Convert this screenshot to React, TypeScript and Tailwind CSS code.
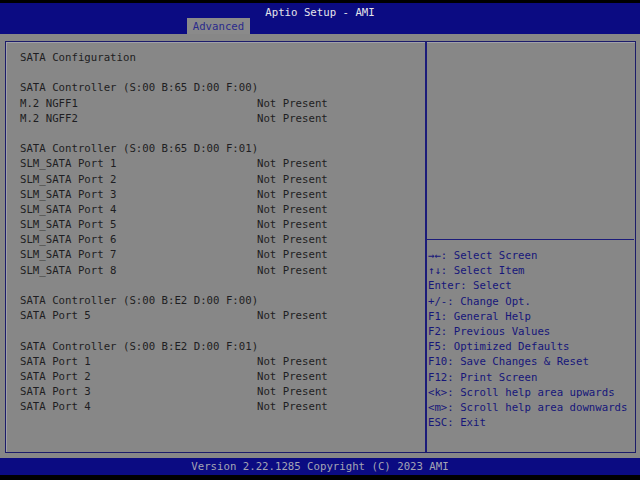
import React from 'react';

type Row = { label: string; value?: string } | null;

const rows: Row[] = [
  { label: 'SATA Configuration' },
  null,
  { label: 'SATA Controller (S:00 B:65 D:00 F:00)' },
  { label: 'M.2 NGFF1', value: 'Not Present' },
  { label: 'M.2 NGFF2', value: 'Not Present' },
  null,
  { label: 'SATA Controller (S:00 B:65 D:00 F:01)' },
  { label: 'SLM_SATA Port 1', value: 'Not Present' },
  { label: 'SLM_SATA Port 2', value: 'Not Present' },
  { label: 'SLM_SATA Port 3', value: 'Not Present' },
  { label: 'SLM_SATA Port 4', value: 'Not Present' },
  { label: 'SLM_SATA Port 5', value: 'Not Present' },
  { label: 'SLM_SATA Port 6', value: 'Not Present' },
  { label: 'SLM_SATA Port 7', value: 'Not Present' },
  { label: 'SLM_SATA Port 8', value: 'Not Present' },
  null,
  { label: 'SATA Controller (S:00 B:E2 D:00 F:00)' },
  { label: 'SATA Port 5', value: 'Not Present' },
  null,
  { label: 'SATA Controller (S:00 B:E2 D:00 F:01)' },
  { label: 'SATA Port 1', value: 'Not Present' },
  { label: 'SATA Port 2', value: 'Not Present' },
  { label: 'SATA Port 3', value: 'Not Present' },
  { label: 'SATA Port 4', value: 'Not Present' },
];

const help = [
  '→←: Select Screen',
  '↑↓: Select Item',
  'Enter: Select',
  '+/-: Change Opt.',
  'F1: General Help',
  'F2: Previous Values',
  'F5: Optimized Defaults',
  'F10: Save Changes & Reset',
  'F12: Print Screen',
  '<k>: Scroll help area upwards',
  '<m>: Scroll help area downwards',
  'ESC: Exit',
];

export default function App() {
  return (
    <div className="w-[640px] h-[480px] flex flex-col bg-black font-['DejaVu_Sans_Mono',monospace] text-[10.7px] leading-[15.2px] overflow-hidden">
      {/* header */}
      <div className="mt-[3px] h-[31px] bg-[#0b0b82] relative flex flex-col items-center">
        <div className="text-[#e4e4ea] mt-[2px]">Aptio Setup - AMI</div>
        <div className="absolute left-[187px] bottom-0 w-[63px] h-[16px] bg-[#8a8a8a] text-[#2a2a8c] flex items-center justify-center pt-[1px]">
          Advanced
        </div>
      </div>

      {/* body */}
      <div className="h-[424px] bg-[#878787] pt-[7px] pl-[5px] pr-[4px] pb-[5px] flex">
        <div className="flex-1 flex border border-[#1c1c6a] shadow-[inset_1px_1px_0_#a0a0a8]">
          <div className="w-[419px] pl-[14px] pt-[8px] text-[#1e1e22]">
            {rows.map((r, i) =>
              r ? (
                <div key={i} className="flex h-[15.2px] whitespace-pre">
                  <span className="w-[237px]">{r.label}</span>
                  {r.value && <span>{r.value}</span>}
                </div>
              ) : (
                <div key={i} className="h-[15.2px]" />
              )
            )}
          </div>
          <div className="w-[2px] bg-[#1c1c7a]" />
          <div className="flex-1 flex flex-col">
            <div className="h-[197px]" />
            <div className="h-px bg-[#1c1c7a] mr-[1px]" />
            <div className="pl-[1px] pt-[8px] text-[#16167a] whitespace-pre">
              {help.map((h) => (
                <div key={h} className="h-[15.2px]">{h}</div>
              ))}
            </div>
          </div>
        </div>
      </div>

      {/* footer */}
      <div className="h-[17px] bg-[#0b0b82] text-[#a4a4b4] flex items-center justify-center pt-[1px]">
        Version 2.22.1285 Copyright (C) 2023 AMI
      </div>
    </div>
  );
}
